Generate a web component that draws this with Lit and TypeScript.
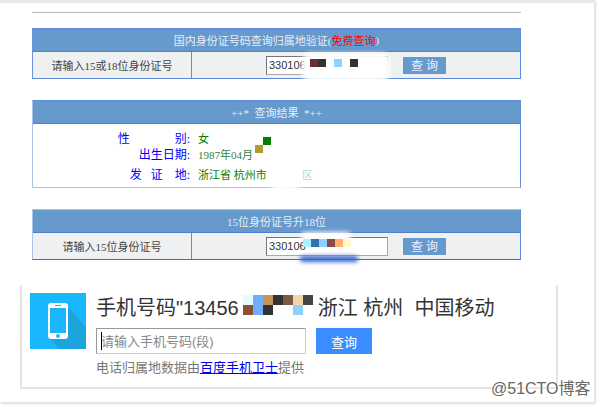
import { LitElement, html, css } from "lit";
import { customElement } from "lit/decorators.js";

const cell = (c: string) => html`<i style="background:${c}"></i>`;

@customElement("app-root")
export class AppRoot extends LitElement {
  static styles = css`
    :host { display: block; width: 599px; height: 407px; overflow: hidden; background: #fff; position: relative;
      font-family: "Liberation Serif", "Noto Sans CJK SC", serif; font-size: 11px; }
    .frame { width: 595px; height: 403px; box-sizing: border-box; background: #fff;
      border-top: 3px solid #e9e9e9; border-right: 1px solid #e6e6e6; border-bottom: 1px solid #e2e2e2;
      box-shadow: 1px 1px 2px #ddd; padding: 9px 0 0 20px; overflow: hidden; }
    .main { width: 489px; margin-left: 12px; display: flex; flex-direction: column; }
    .rule { height: 1px; background: #b9b9b9; margin-bottom: 15px; }
    .tbl { border: 1px solid #5f8ddb; border-left-color: #6a95dd; background: #fff; position: relative; margin-bottom: 21px; }
    .tbl.pale { border-left-color: #a9c3ea; border-bottom-color: #a9c3ea; }
    .tbl.deep { border-bottom-color: #3a6fd0; border-left-color: #a9c3ea; border-top-color: #a9c3ea; }
    .head { height: 22px; background: #6699cc; border-bottom: 1px solid #4f80d0; color: #e6eef7;
      display: flex; align-items: center; justify-content: center; white-space: pre; }
    .red { color: #f00; }
    .row { height: 26px; display: grid; grid-template-columns: 159px 1fr; background: #eef0f2; }
    .lab { display: flex; align-items: center; justify-content: center; color: #444; border-right: 1px solid #5f8ddb; }
    .ctl { display: flex; align-items: center; padding-left: 74px; gap: 15px; }
    .ctl input { width: 122px; height: 19px; box-sizing: border-box; padding: 0 0 0 2px; margin: 0; background: #fff;
      border: 1px solid #aaa; border-top-color: #777; border-left-color: #777; font: 11px "Liberation Sans", sans-serif; color: #333; outline: none; }
    .btn { width: 43px; height: 17px; background: #6699cc; color: #eef; border: 0; display: flex; align-items: center;
      justify-content: center; font-size: 12px; white-space: pre; }
    .res { padding: 7px 0 5px; display: grid; grid-template-columns: 157px 1fr; grid-auto-rows: 16px; column-gap: 8px; position: relative; height: 63px; box-sizing: border-box; align-content: start; }
    .res .k { color: #00f; text-align: right; white-space: pre; line-height: 16px; font-size: 12px; }
    .res .v { color: #008000; white-space: pre; line-height: 16px; }
    .res .third { margin-top: 4px; }
    .v.yr { color: #2e8540; }
    .faint { position: absolute; left: 269px; top: 43px; color: #b5dcb5; line-height: 16px; }
    .blot { position: absolute; background: #fff; filter: blur(2px); border-radius: 8px; }
    .blot.blue { background: #3366cc; }
    .m { position: absolute; display: flex; }
    .m i { display: block; width: 8px; height: 8px; }
    .card { width: 538px; height: 104px; box-sizing: border-box; margin-top: 4px; border-left: 2px solid #e4e4e4; border-right: 2px solid #e4e4e4;
      border-bottom: 2px solid #e4e4e4; padding: 8px 0 0 8px; display: flex; gap: 10px; background: #fff; position: relative;
      font-family: "Liberation Sans", "Noto Sans CJK SC", sans-serif; }
    .icon { width: 56px; height: 56px; flex: none; display: block; }
    .body { display: flex; flex-direction: column; }
    .title { font-size: 20px; line-height: 30px; color: #333; white-space: pre; display: flex; align-items: center; height: 30px; }
    .mosaic { display: grid; grid-template-columns: repeat(7, 10px); grid-auto-rows: 10px; margin: 0 5px 6px 4px; }
    .mosaic i { display: block; }
    .search { display: flex; gap: 10px; margin-top: 5px; height: 26px; position: relative; }
    .search input { width: 210px; height: 26px; box-sizing: border-box; margin: 0; padding: 0 0 0 4px; font: 13px "Liberation Sans", "Noto Sans CJK SC", sans-serif;
      border: 1px solid #ccc; border-top-color: #999; border-left-color: #999; outline: none; background: #fff; }
    .search input::placeholder { color: #888; opacity: 1; }
    .caret { position: absolute; left: 5px; top: 4px; width: 1px; height: 18px; background: #000; }
    .go { width: 56px; height: 26px; background: #3a8cff; color: #fff; display: flex; align-items: center; justify-content: center; font-size: 13px; }
    .foot { margin-top: 5px; font-size: 13px; line-height: 18px; color: #777; white-space: pre; }
    .foot a { color: #00e; text-decoration: underline; }
    .mark { position: absolute; left: 491px; top: 379px; font: 16px/20px "Liberation Sans", "Noto Sans CJK SC", sans-serif; color: #666;
      text-shadow: 0 0 2px #fff, 0 0 2px #fff, 0 0 3px #fff; white-space: pre; }
  `;

  render() {
    return html`
      <div class="frame">
        <div class="main">
          <div class="rule"></div>

          <div class="tbl">
            <div class="head">国内身份证号码查询归属地验证(<span class="red">免费查询</span>)</div>
            <div class="row">
              <div class="lab">请输入15或18位身份证号</div>
              <div class="ctl"><input value="330106" /><div class="btn">查 询</div></div>
            </div>
            <div class="blot" style="left:269px;top:24px;width:88px;height:28px"></div>
            <div class="m" style="left:277px;top:30px">
              ${cell("#6b2f2f")}${cell("#333")}${cell("#fff")}${cell("#8fd0ff")}${cell("#fff")}${cell("#333")}
            </div>
          </div>

          <div class="tbl pale">
            <div class="head">++*  查询结果  *++</div>
            <div class="res">
              <div class="k">性               别:</div><div class="v">女</div>
              <div class="k">出生日期:</div><div class="v yr">1987年04月</div>
              <div class="k third">发   证    地:</div><div class="v third">浙江省 杭州市</div>
              <div class="m" style="left:222px;top:21px">${cell("#b09f30")}</div>
              <div class="m" style="left:230px;top:13px">${cell("#008000")}</div>
              <div class="blot" style="left:236px;top:42px;width:32px;height:24px"></div>
              <span class="faint">区</span>
            </div>
          </div>

          <div class="tbl deep">
            <div class="head">15位身份证号升18位</div>
            <div class="row">
              <div class="lab">请输入15位身份证号</div>
              <div class="ctl"><input value="330106" /><div class="btn">查 询</div></div>
            </div>
            <div class="blot blue" style="left:267px;top:46px;width:58px;height:6px"></div>
            <div class="blot" style="left:268px;top:22px;width:50px;height:9px"></div>
            <div class="m" style="left:270px;top:29px">
              ${cell("#aaf0ff")}${cell("#2f72b0")}${cell("#8fd0ff")}${cell("#8b4a4a")}${cell("#ffb070")}${cell("#fff8c8")}
            </div>
          </div>
        </div>

        <div class="card">
          <svg class="icon" viewBox="0 0 56 56">
            <rect width="56" height="56" fill="#1ab7ff" />
            <path d="M38 14 L56 34 V56 H30 L20 46 Z" fill="#1aa5dc" />
            <rect x="18" y="10" width="20" height="36" rx="3" fill="#fff" />
            <rect x="20" y="15" width="16" height="25" fill="#1ab7ff" />
            <rect x="25" y="12" width="6" height="1" fill="#1ab7ff" />
            <circle cx="28" cy="43" r="2" fill="#1ab7ff" />
          </svg>
          <div class="body">
            <div class="title">手机号码"13456<div class="mosaic">
                ${cell("#e6fbff")}${cell("#70aefc")}${cell("#c8935a")}${cell("#333")}${cell("#7a5c48")}${cell("#f3d3a8")}${cell("#444")}
                ${cell("#8a5230")}${cell("#70aefc")}${cell("#333")}${cell("#fff")}${cell("#fff")}${cell("#8fd0ff")}${cell("#fff")}
              </div>浙江 杭州  中国移动</div>
            <div class="search">
              <input placeholder="请输入手机号码(段)" />
              <span class="caret"></span>
              <div class="go">查询</div>
            </div>
            <div class="foot">电话归属地数据由<a>百度手机卫士</a>提供</div>
          </div>
        </div>
      </div>
      <div class="mark">@51CTO博客</div>
    `;
  }
}
